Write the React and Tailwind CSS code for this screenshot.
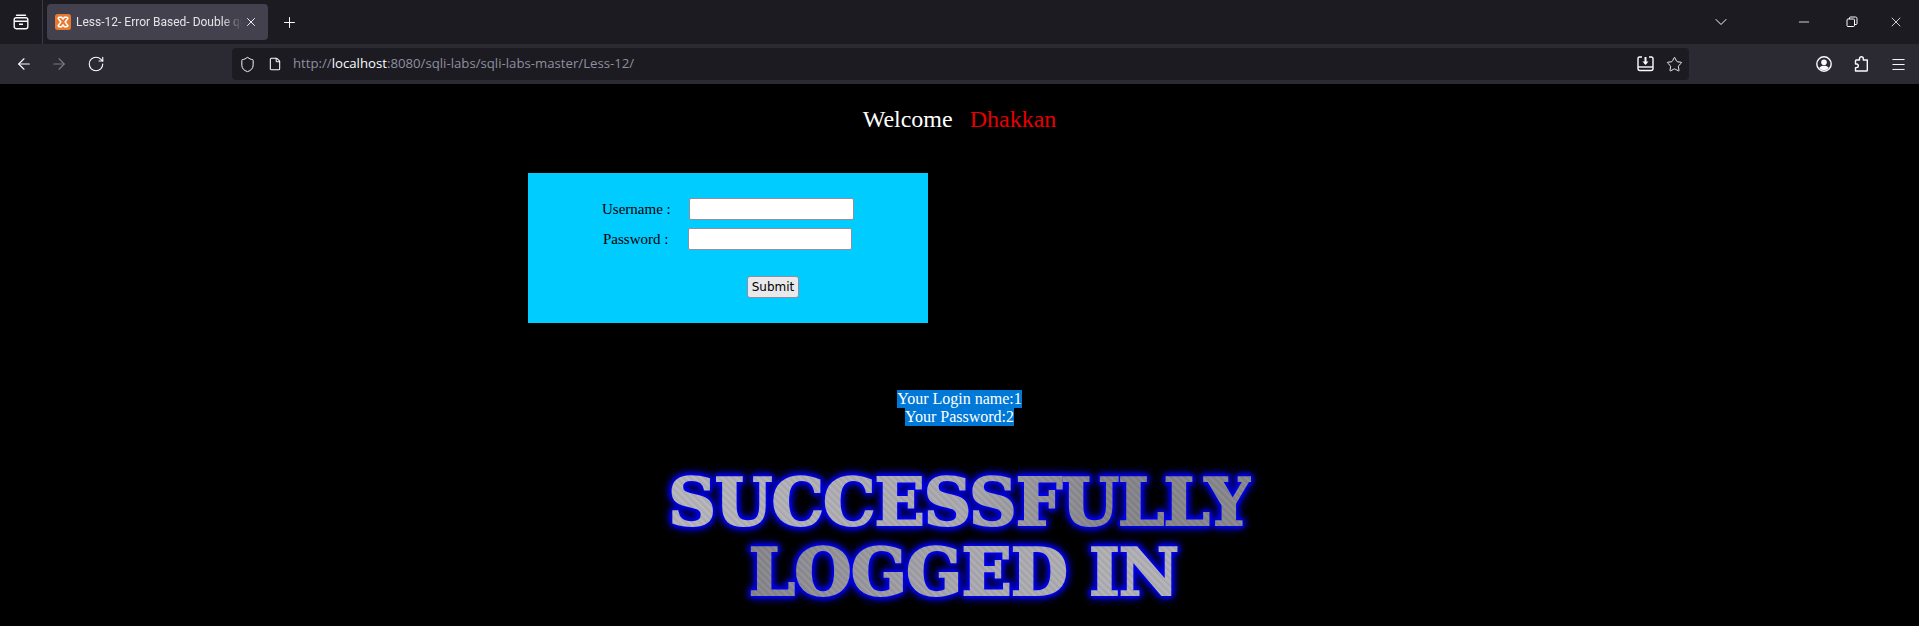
import React from 'react';
import { ArrowLeft, ArrowRight, RotateCw, Shield, File, Star, Menu, Plus, X, ChevronDown, Minus } from 'lucide-react';

const TabsIcon = () => (
  <svg width="16" height="16" viewBox="0 0 16 16" fill="none" stroke="#fbfbfe" strokeWidth="1.4">
    <path d="M3.500 1.200h9" strokeLinecap="round" />
    <rect x="1.200" y="3.700" width="13.600" height="11" rx="2" />
    <path d="M1.200 7.200h13.600M6 10.200h4" />
  </svg>
);

const XamppIcon = () => (
  <svg width="16" height="16" viewBox="0 0 16 16" className="shrink-0">
    <rect width="16" height="16" rx="2.500" fill="#e8792f" />
    <path d="M4 3.200h2.600L8 5l1.400-1.800H12l.9 1-2.700 3.800 2.700 3.800-.9 1H9.400L8 11l-1.400 1.800H4l-.9-1L5.800 8 3.100 4.200z" fill="none" stroke="#fff" strokeWidth="1.500" />
  </svg>
);

const RestoreIcon = () => (
  <svg width="12" height="12" viewBox="0 0 12 12" fill="none" stroke="#fbfbfe" strokeWidth="1">
    <rect x="1" y="3" width="7.500" height="7.500" rx="1" />
    <path d="M3.500 3V2a1 1 0 0 1 1-1h5a1.500 1.500 0 0 1 1.500 1.500v5a1 1 0 0 1-1 1h-1" />
  </svg>
);

const SaveIcon = () => (
  <svg width="17" height="16" viewBox="0 0 17 16" fill="none" stroke="#fbfbfe" strokeWidth="1.400">
    <path d="M5 1H2.500A1.500 1.500 0 0 0 1 2.500v10A2 2 0 0 0 3 14.500h11a2 2 0 0 0 2-2v-10A1.500 1.500 0 0 0 14.500 1H12" />
    <path d="M1 11h15" />
    <path d="M8.500 1v6.500" strokeWidth="2" />
    <path d="M5.500 5.500h6l-3 3.500z" fill="#fbfbfe" stroke="none" />
  </svg>
);

const AccountIcon = () => (
  <svg width="16" height="16" viewBox="0 0 16 16" fill="none">
    <circle cx="8" cy="8" r="7.200" stroke="#fbfbfe" strokeWidth="1.400" />
    <circle cx="8" cy="6.300" r="2.800" fill="#fbfbfe" />
    <path d="M3.200 12c1-1.700 2.800-2.300 4.800-2.300s3.800.6 4.800 2.300A6.500 6.500 0 0 1 8 14.200 6.500 6.500 0 0 1 3.200 12z" fill="#fbfbfe" />
  </svg>
);

const PuzzleIcon = () => (
  <svg width="16" height="16" viewBox="0 0 16 16" fill="none" stroke="#fbfbfe" strokeWidth="1.400" strokeLinejoin="round">
    <path d="M6.500 4V2.700a1.900 1.900 0 0 1 3.800 0V4h4v10.200a.8.800 0 0 1-.8.800H2.500v-3.400h1a1.800 1.800 0 0 0 0-3.600h-1V4.800A.8.800 0 0 1 3.300 4z" />
  </svg>
);

const TabBar = () => (
  <div className="flex h-[44px] items-center bg-[#1c1b22] text-[#fbfbfe]">
    <div className="flex h-full w-[43px] items-center justify-center border-r border-[#3a3944]">
      <TabsIcon />
    </div>
    <div className="ml-[4px] flex h-[36px] w-[221px] items-center rounded-[4px] bg-[#42414d] pl-[8px] pr-[10px]">
      <XamppIcon />
      <span className="ml-[5px] w-[166px] overflow-hidden whitespace-nowrap font-['Roboto',sans-serif] text-[12px] text-[#e4e4e8] [mask-image:linear-gradient(90deg,#000_88%,transparent)]">Less-12- Error Based- Double quotes</span>
      <X size={14} strokeWidth={1.6} className="ml-auto" />
    </div>
    <Plus size={17} strokeWidth={1.4} className="ml-[13px]" />
    <ChevronDown size={20} strokeWidth={1.2} className="ml-auto mr-[65px]" />
    <Minus size={16} strokeWidth={1.2} className="mr-[34px]" />
    <div className="mr-[30px]"><RestoreIcon /></div>
    <X size={16} strokeWidth={1.2} className="mr-[15px]" />
  </div>
);

const NavBar = () => (
  <div className="flex h-[40px] items-center bg-[#2b2a33] pl-[15px] text-[#fbfbfe]">
    <ArrowLeft size={18} strokeWidth={1.5} />
    <ArrowRight size={18} strokeWidth={1.5} className="ml-[17px] text-[#7a7980]" />
    <RotateCw size={18} strokeWidth={1.5} className="ml-[19px]" />
    <div className="ml-[127px] flex h-[32px] w-[1457px] items-center rounded-[4px] bg-[#1c1b22] pl-[7px] pr-[6px]">
      <Shield size={17} strokeWidth={1.4} />
      <File size={14} strokeWidth={1.8} className="ml-[12px]" />
      <span className="ml-[11px] whitespace-nowrap font-['Open_Sans',sans-serif] text-[13.200px] text-[#8f8f9d]">
        http://<span className="text-[#fbfbfe]">localhost</span>:8080/sqli-labs/sqli-labs-master/Less-12/
      </span>
      <div className="ml-auto flex items-center gap-[12px]">
        <SaveIcon />
        <Star size={17} strokeWidth={1.3} />
      </div>
    </div>
    <div className="ml-[127px] flex items-center gap-[21px]">
      <AccountIcon />
      <PuzzleIcon />
      <Menu size={17} strokeWidth={1.4} />
    </div>
  </div>
);

const LoginBox = () => (
  <div className="ml-[528px] mt-[40px] flex h-[150px] w-[400px] flex-col bg-[#00ccff] pt-[25px] font-['Liberation_Serif',serif] text-[15px] text-black">
    <div className="flex h-[22px] items-center pl-[74px]">
      <span className="w-[87px]">Username :</span>
      <input type="text" className="h-[22px] w-[165px] rounded-[2px] border border-[#8f8f9d] bg-white" />
    </div>
    <div className="mt-[8px] flex h-[22px] items-center pl-[75px]">
      <span className="w-[85px]">Password :</span>
      <input type="password" className="h-[22px] w-[164px] rounded-[2px] border border-[#8f8f9d] bg-white" />
    </div>
    <button className="ml-[219px] mt-[26px] h-[22px] w-[52px] rounded-[3px] border border-[#8f8f9d] bg-[#e9e9ed] font-['DejaVu_Sans',sans-serif] text-[12px] leading-none">
      Submit
    </button>
  </div>
);

const SuccessLogo = () => (
  <div className="mt-[41px] flex flex-col items-center font-['DejaVu_Serif',serif] text-[66px] font-bold leading-[70px] tracking-[-1px] [filter:drop-shadow(0_0_1px_#0000ff)_drop-shadow(0_0_2px_#0000ff)_drop-shadow(0_0_3px_#0000e0)_drop-shadow(0_0_3px_#0000a0)]">
    <span className="bg-[repeating-linear-gradient(45deg,rgba(255,255,255,0.05)_0px,rgba(255,255,255,0.05)_1px,rgba(0,0,0,0.05)_2px,rgba(0,0,0,0.05)_3px,rgba(255,255,255,0.02)_5px),linear-gradient(90deg,#b8b8bc,#aaaab0_50%,#85858b_75%,#88888e)] bg-clip-text text-transparent [-webkit-text-stroke:2px_transparent]">
      SUCCESSFULLY
    </span>
    <span className="ml-[8px] bg-[repeating-linear-gradient(45deg,rgba(255,255,255,0.05)_0px,rgba(255,255,255,0.05)_1px,rgba(0,0,0,0.05)_2px,rgba(0,0,0,0.05)_3px,rgba(255,255,255,0.02)_5px),linear-gradient(90deg,#85858b,#aaaab0_50%,#b4b4b8)] bg-clip-text text-transparent [-webkit-text-stroke:2px_transparent]">
      LOGGED IN
    </span>
  </div>
);

export default function App() {
  return (
    <div className="h-[626px] overflow-hidden bg-black">
      <TabBar />
      <NavBar />
      <div className="mt-[21px] text-center font-['Liberation_Serif',serif] text-[24px] leading-[28px] text-white">
        Welcome<span className="ml-[17px] text-[#e60000]">Dhakkan</span>
      </div>
      <LoginBox />
      <div className="mt-[67px] flex flex-col items-center font-['Liberation_Serif',serif] text-[16px] leading-[18px] text-white">
        <span className="bg-[#0078d7]">Your Login name:1</span>
        <span className="bg-[#0078d7]">Your Password:2</span>
      </div>
      <SuccessLogo />
    </div>
  );
}
